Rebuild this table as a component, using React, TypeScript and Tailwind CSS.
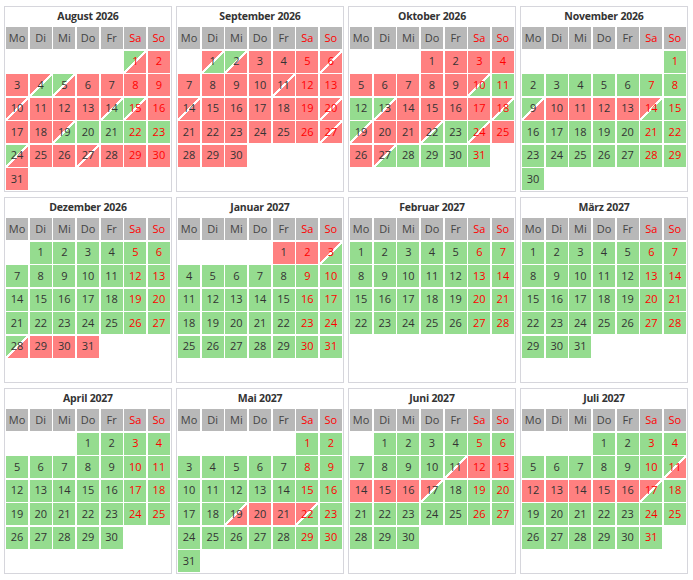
import React from 'react';

type DayState = 'f' | 'b' | 'a' | 'd' | 'x';

const rep = (n: number, ch: string) => ch.repeat(n);

// booking state per day: f = frei, b = belegt, a = Anreise, d = Abreise, x = Wechsel
const months: { name: string; year: number; month: number; days: string }[] = [
  { name: 'August', year: 2026, month: 7, days: 'abbdabbbbxbbbdabbbdffffabbxbbbb' },
  { name: 'September', year: 2026, month: 8, days: 'dabbbxbbbbxbbxbbbbbxbbbbbbxbbb' },
  { name: 'Oktober', year: 2026, month: 9, days: 'bbbbbbbbbdffabbbbdabbdfabbdffff' },
  { name: 'November', year: 2026, month: 10, days: rep(8, 'f') + 'abbbbd' + rep(16, 'f') },
  { name: 'Dezember', year: 2026, month: 11, days: rep(27, 'f') + 'abbb' },
  { name: 'Januar', year: 2027, month: 0, days: 'bbd' + rep(28, 'f') },
  { name: 'Februar', year: 2027, month: 1, days: rep(28, 'f') },
  { name: 'März', year: 2027, month: 2, days: rep(31, 'f') },
  { name: 'April', year: 2027, month: 3, days: rep(30, 'f') },
  { name: 'Mai', year: 2027, month: 4, days: rep(18, 'f') + 'abbd' + rep(9, 'f') },
  { name: 'Juni', year: 2027, month: 5, days: rep(10, 'f') + 'abbbbbd' + rep(13, 'f') },
  { name: 'Juli', year: 2027, month: 6, days: rep(10, 'f') + 'abbbbbd' + rep(14, 'f') },
];

const weekdays = ['Mo', 'Di', 'Mi', 'Do', 'Fr', 'Sa', 'So'];

const stateClass: Record<DayState, string> = {
  f: 'bg-[#95dc8f]',
  b: 'bg-[#ff8080]',
  a: 'bg-[linear-gradient(to_bottom_right,#95dc8f_46%,#ffffff_46%,#ffffff_54%,#ff8080_54%)]',
  d: 'bg-[linear-gradient(to_bottom_right,#ff8080_46%,#ffffff_46%,#ffffff_54%,#95dc8f_54%)]',
  x: 'bg-[linear-gradient(to_bottom_right,#ff8080_46%,#ffffff_46%,#ffffff_54%,#ff8080_54%)]',
};

const MonthCard: React.FC<{ name: string; year: number; month: number; days: string }> = ({
  name,
  year,
  month,
  days,
}) => {
  const offset = (new Date(year, month, 1).getDay() + 6) % 7;
  const cells: (number | null)[] = [];
  for (let i = 0; i < offset; i++) cells.push(null);
  for (let d = 1; d <= days.length; d++) cells.push(d);

  return (
    <div className="w-[168px] h-[186px] border border-[#d6d6dc] bg-white px-px">
      <div className="h-[20px] flex items-center justify-center text-[10.5px] tracking-[-0.2px] font-bold text-[#333]">
        {name} {year}
      </div>
      <div className="grid grid-cols-7 gap-[1.5px]">
        {weekdays.map((w, i) => (
          <div
            key={w}
            className={`h-[22px] flex items-center justify-center bg-[#b8b8b8] text-[11px] ${
              i >= 5 ? 'text-[#ff0000]' : 'text-[#444]'
            }`}
          >
            {w}
          </div>
        ))}
        {cells.map((d, i) =>
          d === null ? (
            <div key={'e' + i} className="h-[22px]" />
          ) : (
            <div
              key={d}
              className={`h-[22px] flex items-center justify-center text-[11px] ${
                stateClass[days[d - 1] as DayState]
              } ${i % 7 >= 5 ? 'text-[#ff0000]' : 'text-[#333]'}`}
            >
              {d}
            </div>
          )
        )}
      </div>
    </div>
  );
};

const App: React.FC = () => {
  return (
    <div className="w-[693px] h-[580px] bg-white pl-[4px] pt-[6px] font-['Open_Sans',sans-serif]">
      <div className="flex flex-wrap gap-x-[4px] gap-y-[5px]">
        {months.map((m) => (
          <MonthCard key={m.name} {...m} />
        ))}
      </div>
    </div>
  );
};

export default App;
